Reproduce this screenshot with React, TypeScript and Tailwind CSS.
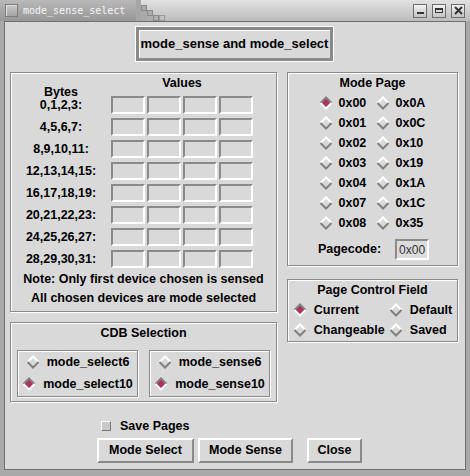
import React from "react";

const etched = "border border-[#8a8a8a] shadow-[inset_1px_1px_0_#ffffff,1px_1px_0_#ffffff]";
const sunken = "border-2 border-t-[#8a8a8a] border-l-[#8a8a8a] border-b-white border-r-white";
const raised = "border-2 border-t-white border-l-white border-b-[#8a8a8a] border-r-[#8a8a8a]";

const byteRows = [
  "0,1,2,3:",
  "4,5,6,7:",
  "8,9,10,11:",
  "12,13,14,15:",
  "16,17,18,19:",
  "20,21,22,23:",
  "24,25,26,27:",
  "28,29,30,31:",
];

const pages = [
  ["0x00", "0x0A"],
  ["0x01", "0x0C"],
  ["0x02", "0x10"],
  ["0x03", "0x19"],
  ["0x04", "0x1A"],
  ["0x07", "0x1C"],
  ["0x08", "0x35"],
];

const Diamond = ({ on }: { on?: boolean }) => (
  <svg width="14" height="14" viewBox="0 0 14 14" className="shrink-0">
    <polygon points="7,1.5 12.5,7 7,12.5 1.5,7" fill={on ? "#b03060" : "#d9d9d9"} />
    <polyline
      points="1.5,7 7,1.5 12.5,7"
      fill="none"
      stroke={on ? "#808080" : "#ffffff"}
      strokeWidth="2"
    />
    <polyline
      points="1.5,7 7,12.5 12.5,7"
      fill="none"
      stroke={on ? "#ffffff" : "#808080"}
      strokeWidth="2"
    />
  </svg>
);

const Radio = ({ label, on, gap = "gap-[6px]" }: { label: string; on?: boolean; gap?: string }) => (
  <div className={`flex items-center ${gap} whitespace-nowrap`}>
    <Diamond on={on} />
    <span>{label}</span>
  </div>
);

const WinBtn = ({ children }: { children: React.ReactNode }) => (
  <div className="w-[14px] h-[14px] border border-[#6e6e6e] bg-gradient-to-b from-[#f2f2f2] to-[#c4c4c4] flex items-center justify-center">
    {children}
  </div>
);

const TitleBar = () => (
  <div className="h-[21px] flex bg-gradient-to-b from-[#e2e2e2] to-[#bcbcbc]">
    <div className="w-[136px] h-full bg-gradient-to-b from-[#b9b9b9] to-[#979797] flex items-center pl-[5px] gap-[5px]">
      <div className="w-[13px] h-[13px] border border-[#7c7c7c] bg-gradient-to-b from-[#c9c9c9] to-[#a4a4a4] shadow-[inset_1px_1px_0_#dedede]" />
      <span className="font-['DejaVu_Sans_Mono',monospace] font-normal text-[10px] text-[#f6f6f6] leading-none">
        mode_sense_select
      </span>
    </div>
    <svg width="34" height="21" viewBox="0 0 34 21" className="shrink-0">
      <rect x="0" y="0" width="5" height="21" fill="#a6a6a6" />
      <rect x="5" y="5" width="6" height="16" fill="#a9a9a9" />
      <rect x="11" y="10" width="6" height="11" fill="#adadad" />
      <rect x="17" y="15" width="6" height="6" fill="#b1b1b1" />
      <rect x="5.5" y="5.5" width="5" height="5" fill="none" stroke="#8a8a8a" />
      <rect x="11.5" y="10.5" width="5" height="5" fill="none" stroke="#8a8a8a" />
      <rect x="17.5" y="15.5" width="5" height="5" fill="none" stroke="#8a8a8a" />
      <rect x="23.5" y="15.5" width="5" height="5" fill="none" stroke="#9a9a9a" />
    </svg>
    <div className="flex-1 flex items-center justify-end gap-[5px] pr-[5px]">
      <WinBtn>
        <div className="w-[7px] h-[2px] bg-[#333] mt-[5px]" />
      </WinBtn>
      <WinBtn>
        <div className="w-[8px] h-[5px] border border-[#333] border-t-2" />
      </WinBtn>
      <WinBtn>
        <svg width="9" height="9" viewBox="0 0 9 9">
          <path d="M1 1L8 8M8 1L1 8" stroke="#333" strokeWidth="2" />
        </svg>
      </WinBtn>
    </div>
  </div>
);

const BytesPanel = () => (
  <div className={`${etched} h-[240px] flex flex-col`}>
    <div className="h-[23px] flex pl-[13px] leading-[15px]">
      <div className="w-[74px] text-center pt-[12px]">Bytes</div>
      <div className="w-[142px] ml-[13px] text-center pt-[3px]">Values</div>
    </div>
    <div className="flex flex-col gap-[4px] pl-[13px]">
      {byteRows.map((label, i) => (
        <div key={i} className="h-[18px] flex items-center">
          <div className="w-[74px] text-center whitespace-nowrap">{label}</div>
          <div className="ml-[13px] flex gap-[2px]">
            {[0, 1, 2, 3].map((c) => (
              <div key={c} className={`${sunken} w-[34px] h-[18px] bg-[#d9d9d9]`} />
            ))}
          </div>
        </div>
      ))}
    </div>
    <div className="mt-[2px] leading-[19px] text-center whitespace-nowrap">
      <div>Note: Only first device chosen is sensed</div>
      <div>All chosen devices are mode selected</div>
    </div>
  </div>
);

const CdbPanel = () => (
  <div className={`${etched} h-[80px] flex flex-col mt-[10px]`}>
    <div className="h-[20px] leading-[20px] text-center">CDB Selection</div>
    <div className="mt-[7px] flex gap-[11px] px-[6px]">
      <div className={`${etched} w-[121px] h-[47px] flex flex-col items-center`}>
        <div className="h-[22px] flex items-center">
          <Radio label="mode_select6" gap="gap-[7px]" />
        </div>
        <div className="h-[22px] flex items-center">
          <Radio label="mode_select10" on gap="gap-[7px]" />
        </div>
      </div>
      <div className={`${etched} w-[121px] h-[47px] flex flex-col items-center`}>
        <div className="h-[22px] flex items-center">
          <Radio label="mode_sense6" gap="gap-[7px]" />
        </div>
        <div className="h-[22px] flex items-center">
          <Radio label="mode_sense10" on gap="gap-[7px]" />
        </div>
      </div>
    </div>
  </div>
);

const ModePagePanel = () => (
  <div className={`${etched} h-[194px] flex flex-col`}>
    <div className="h-[20px] leading-[20px] text-center">Mode Page</div>
    <div className="flex justify-center pl-[2px]">
      <div className="grid grid-cols-[57px_53px]">
        {pages.map(([a, b], i) => (
          <React.Fragment key={i}>
            <div className="h-[20px] flex items-center">
              <Radio label={a} on={i === 0} />
            </div>
            <div className="h-[20px] flex items-center">
              <Radio label={b} />
            </div>
          </React.Fragment>
        ))}
      </div>
    </div>
    <div className="mt-[6px] h-[21px] flex items-center justify-center gap-[14px] pl-[2px]">
      <span>Pagecode:</span>
      <div
        className={`${sunken} w-[34px] h-[21px] bg-[#dcdcdc] flex items-center pl-[2px] font-normal text-[12px] text-[#333] leading-none`}
      >
        0x00
      </div>
    </div>
  </div>
);

const PageControlPanel = () => (
  <div className={`${etched} h-[63px] flex flex-col mt-[13px]`}>
    <div className="h-[20px] leading-[20px] text-center">Page Control Field</div>
    <div className="flex justify-center">
      <div className="grid grid-cols-[96px_auto]">
        <div className="h-[20px] flex items-center">
          <Radio label="Current" on gap="gap-[7px]" />
        </div>
        <div className="h-[20px] flex items-center">
          <Radio label="Default" gap="gap-[7px]" />
        </div>
        <div className="h-[20px] flex items-center">
          <Radio label="Changeable" gap="gap-[7px]" />
        </div>
        <div className="h-[20px] flex items-center">
          <Radio label="Saved" gap="gap-[7px]" />
        </div>
      </div>
    </div>
  </div>
);

export default function App() {
  return (
    <div className="w-[470px] h-[476px] flex flex-col bg-[#a9a9a9] font-['Liberation_Sans',Arial,sans-serif] font-bold text-[12.5px] text-black overflow-hidden select-none">
      <TitleBar />
      <div className="flex-1 mx-[4px] mb-[6px] border border-[#6f6f6f] bg-[#d9d9d9] flex flex-col">
        {/* header */}
        <div className="flex justify-center mt-[4px] pr-[1px]">
          <div className="w-[199px] h-[36px] border border-white">
            <div className="w-full h-full border-[3px] border-[#8a8a8a] shadow-[inset_1px_1px_0_#ffffff] flex items-center justify-center text-[13px] whitespace-nowrap">
              mode_sense and mode_select
            </div>
          </div>
        </div>

        {/* panels */}
        <div className="mt-[10px] flex pl-[5px] gap-[10px]">
          <div className="w-[267px] flex flex-col">
            <BytesPanel />
            <CdbPanel />
          </div>
          <div className="w-[171px] flex flex-col">
            <ModePagePanel />
            <PageControlPanel />
          </div>
        </div>

        {/* save pages */}
        <div className="mt-[17px] h-[14px] ml-[96px] flex items-center gap-[9px]">
          <div className="w-[10px] h-[10px] bg-[#c8c8c8] border border-t-white border-l-white border-b-[#7a7a7a] border-r-[#7a7a7a]" />
          <span>Save Pages</span>
        </div>

        {/* buttons */}
        <div className="mt-[5px] ml-[92px] flex items-center">
          <button className={`${raised} w-[97px] h-[25px] bg-[#d9d9d9] font-bold`}>Mode Select</button>
          <button className={`${raised} w-[95px] h-[25px] bg-[#d9d9d9] font-bold ml-[4px]`}>Mode Sense</button>
          <button className={`${raised} w-[55px] h-[25px] bg-[#d9d9d9] font-bold ml-[14px]`}>Close</button>
        </div>
      </div>
    </div>
  );
}
